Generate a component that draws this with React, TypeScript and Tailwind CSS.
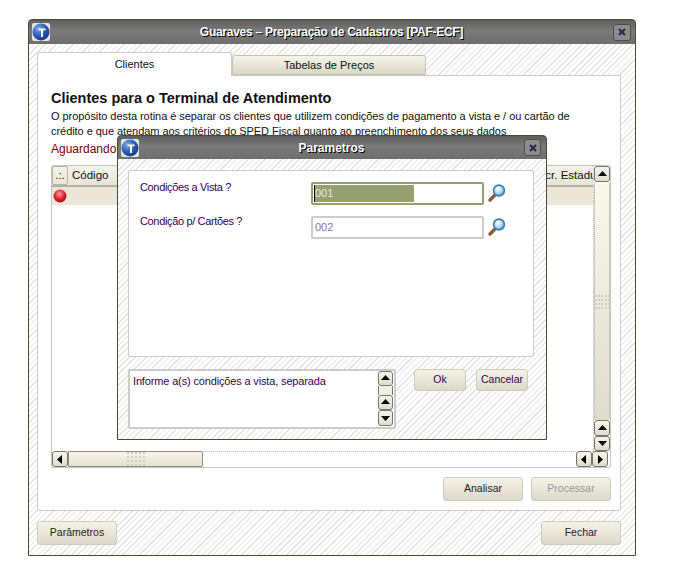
import React from 'react';

const hatch = 'bg-[repeating-linear-gradient(135deg,#e3e3e3_0px,#e3e3e3_1px,#ffffff_1px,#ffffff_4px)]';
const titleBar = 'bg-[linear-gradient(to_bottom,#5e5e5e,#7a7a7a_45%,#6e6e6e)]';
const titleFont = 'font-bold text-[12px] text-white [text-shadow:1px_1px_0_#000]';
const btn = 'flex items-center justify-center rounded-[3px] border border-[#cfccbe] bg-[linear-gradient(to_bottom,#f5f3e9,#dcd9c9)] text-[10.5px]';

const Logo = () => (
  <svg width="18" height="18" viewBox="0 0 18 18" className="shrink-0">
    <defs>
      <radialGradient id="ball" cx="0.35" cy="0.3" r="0.85">
        <stop offset="0" stopColor="#7fa9e6" />
        <stop offset="0.55" stopColor="#2458ae" />
        <stop offset="1" stopColor="#0f3272" />
      </radialGradient>
    </defs>
    <rect width="18" height="18" rx="2" fill="#e4e4e4" />
    <circle cx="9" cy="9" r="8.5" fill="url(#ball)" />
    <path d="M6.5 5.5h7v1.8h-2.5V14H9V7.3H6.5z" fill="#fff" />
  </svg>
);

const CloseBtn = ({ className }: { className: string }) => (
  <div className={`flex items-center justify-center rounded-[3px] border border-[#4c4c4c] bg-[#8c8c8c] ${className}`}>
    <svg width="8" height="8" viewBox="0 0 8 8">
      <path d="M1 1l6 6M7 1L1 7" stroke="#23284a" strokeWidth="2" />
    </svg>
  </div>
);

const Lens = () => (
  <svg width="20" height="20" viewBox="0 0 20 20" className="shrink-0">
    <defs>
      <radialGradient id="lens" cx="0.4" cy="0.35" r="0.7">
        <stop offset="0" stopColor="#ffffff" />
        <stop offset="0.6" stopColor="#a9d3ef" />
        <stop offset="1" stopColor="#3d88c0" />
      </radialGradient>
    </defs>
    <path d="M8.5 11.5L3 17" stroke="#8a5a3a" strokeWidth="3.4" strokeLinecap="round" />
    <circle cx="12" cy="7.5" r="5.4" fill="url(#lens)" stroke="#3b7fb2" strokeWidth="1.6" />
  </svg>
);

const Arrow = ({ dir }: { dir: 'up' | 'down' | 'left' | 'right' }) => {
  const d = { up: 'M0 6L4.5 1 9 6z', down: 'M0 2h9L4.5 7z', left: 'M6 0v9L1 4.5z', right: 'M2 0l5 4.5L2 9z' }[dir];
  return (
    <svg width="9" height="9" viewBox="0 0 9 9">
      <path d={d} fill="#000" />
    </svg>
  );
};

const ScrollBtn = ({ dir, className }: { dir: 'up' | 'down' | 'left' | 'right'; className: string }) => (
  <div className={`flex shrink-0 items-center justify-center rounded-[3px] border border-[#77766c] bg-[linear-gradient(to_bottom,#f8f6ea,#e0ddcd)] ${className}`}>
    <Arrow dir={dir} />
  </div>
);

const Grip = () => (
  <div className="grid grid-cols-5 gap-[2px]">
    {Array.from({ length: 20 }).map((_, i) => (
      <div key={i} className="h-[2px] w-[2px] bg-[#cfcdc0]" />
    ))}
  </div>
);

const App = () => {
  return (
    <div className='relative h-[574px] w-[674px] overflow-hidden bg-white pl-[28px] pt-[19px] font-["Liberation_Sans",sans-serif]'>
      {/* janela principal */}
      <div className={`flex h-[537px] w-[608px] flex-col rounded-t-[4px] border border-[#4a4a3c] ${hatch}`}>
        <div className={`flex h-[24px] shrink-0 items-center pl-[3px] pr-[4px] ${titleBar}`}>
          <Logo />
          <div className={`flex-1 text-center tracking-[-0.27px] ${titleFont}`}>Guaraves – Preparação de Cadastros [PAF-ECF]</div>
          <CloseBtn className="h-[17px] w-[18px]" />
        </div>

        <div className="flex flex-1 flex-col pl-[8px] pr-[14px] pt-[8px]">
          <div className="flex h-[23px] items-end">
            <div className="z-10 -mb-px flex h-[24px] w-[195px] items-center justify-center rounded-t-[3px] border border-b-0 border-[#cccccc] bg-white text-[11px] text-[#111]">
              Clientes
            </div>
            <div className="flex h-[20px] w-[194px] items-center justify-center rounded-t-[3px] border border-[#c4c2b4] bg-[linear-gradient(to_bottom,#f6f4ea,#dbd8c7)] text-[11px] text-[#111]">
              Tabelas de Preços
            </div>
          </div>

          <div className="h-[436px] rounded-b-[3px] border border-[#cccccc] bg-white pl-[13px] pr-[8px]">
            <h1 className="mt-[12px] h-[20px] text-[14.5px] font-bold leading-[20px] text-[#111]">Clientes para o Terminal de Atendimento</h1>
            <p className="mt-[1px] w-[540px] text-[11px] leading-[15px] tracking-[-0.05px] text-[#111]">
              O propósito desta rotina é separar os clientes que utilizem condições de pagamento a vista e / ou cartão de
              <br />
              crédito e que atendam aos critérios do SPED Fiscal quanto ao preenchimento dos seus dados
            </p>
            <div className="mt-[3px] h-[15px] text-[12px] leading-[15px] text-[#800000]">Aguardando Processamento</div>

            <div className="mt-[8px] flex h-[303px] w-[560px] flex-col rounded-[2px] border border-[#c6c6c6]">
              <div className="flex min-h-0 flex-1">
                <div className="flex-1 border-r border-dotted border-[#bbb]">
                  <div className="flex h-[21px] items-stretch border-b-2 border-[#b4b2a5] bg-[linear-gradient(to_bottom,#f5f3e9,#e8e5d6)] text-[11.5px] text-[#111]">
                    <div className="flex w-[16px] items-center justify-center rounded-[2px] border border-[#b8b6a8]">.:.</div>
                    <div className="flex w-[60px] items-center pl-[4px]">Código</div>
                    <div className="ml-auto flex w-[63px] items-center overflow-hidden whitespace-nowrap">Inscr. Estadual</div>
                  </div>
                  <div className="flex h-[18px] items-center bg-[#eae7d9] pl-[1px]">
                    <svg width="14" height="14" viewBox="0 0 14 14">
                      <defs>
                        <radialGradient id="led" cx="0.45" cy="0.35" r="0.7">
                          <stop offset="0" stopColor="#ff9a9a" />
                          <stop offset="0.6" stopColor="#e01c24" />
                          <stop offset="1" stopColor="#8c1016" />
                        </radialGradient>
                      </defs>
                      <circle cx="7" cy="7" r="6.5" fill="url(#led)" />
                    </svg>
                  </div>
                </div>
                <div className="flex w-[16px] shrink-0 flex-col">
                  <ScrollBtn dir="up" className="h-[16px]" />
                  <div className="flex flex-1 items-center justify-center rounded-[2px] border-x border-[#c9c7b9] bg-[linear-gradient(to_bottom,#fbf9ec,#dfdccd)] pt-[2px]">
                    <Grip />
                  </div>
                  <ScrollBtn dir="up" className="h-[16px]" />
                  <ScrollBtn dir="down" className="h-[15px]" />
                </div>
              </div>
              <div className="flex h-[16px] shrink-0">
                <ScrollBtn dir="left" className="w-[16px]" />
                <div className="flex w-[135px] items-center justify-center rounded-r-[2px] border border-[#8f8e83] bg-[linear-gradient(to_bottom,#f7f5e9,#e4e1d2)]">
                  <Grip />
                </div>
                <div className="flex-1 border-t border-dotted border-[#bbb]" />
                <ScrollBtn dir="left" className="w-[16px]" />
                <ScrollBtn dir="right" className="w-[16px]" />
                <div className="w-[2px]" />
              </div>
            </div>

            <div className="mt-[9px] flex w-[560px] justify-end gap-[8px]">
              <div className={`h-[24px] w-[80px] text-[#222] ${btn}`}>Analisar</div>
              <div className={`h-[24px] w-[80px] text-[#999] ${btn}`}>Processar</div>
            </div>
          </div>

          <div className="mt-[10px] flex justify-between">
            <div className={`h-[24px] w-[80px] text-[#222] ${btn}`}>Parâmetros</div>
            <div className={`h-[24px] w-[80px] text-[#222] ${btn}`}>Fechar</div>
          </div>
        </div>
      </div>

      {/* janela de parametros */}
      <div className={`absolute left-[117px] top-[135px] flex h-[305px] w-[430px] flex-col rounded-t-[4px] border border-[#4a4a3c] ${hatch}`}>
        <div className={`flex h-[23px] shrink-0 items-center pl-[3px] pr-[5px] ${titleBar}`}>
          <Logo />
          <div className={`flex-1 text-center ${titleFont}`}>Parametros</div>
          <CloseBtn className="h-[17px] w-[17px]" />
        </div>

        <div className="flex flex-1 flex-col pl-[10px] pr-[12px] pt-[11px]">
          <div className="h-[187px] rounded-[2px] border border-[#cccccc] bg-white pl-[11px] pt-[11px] text-[11px] text-[#3c0050]">
            <div className="flex h-[23px]">
              <div className="-mt-px w-[171px] leading-[12px] tracking-[-0.35px]">Condições a Vista ?</div>
              <div className="flex h-[23px] w-[173px] items-stretch rounded-[2px] border-2 border-[#95a070] bg-white p-[1px]">
                <div className="flex w-[100px] items-center border-l border-black bg-[#95a070] text-[11px] text-[#e8e8e0]">001</div>
              </div>
              <div className="ml-[3px] mt-[1px]"><Lens /></div>
            </div>
            <div className="mt-[11px] flex h-[23px]">
              <div className="-mt-px w-[171px] leading-[12px] tracking-[-0.35px]">Condição p/ Cartões ?</div>
              <div className="flex h-[23px] w-[173px] items-center rounded-[2px] border-2 border-[#cccccc] bg-white pl-[2px] text-[#808080]">002</div>
              <div className="ml-[3px] mt-[1px]"><Lens /></div>
            </div>
          </div>

          <div className="mt-[12px] flex">
            <div className="flex h-[60px] w-[268px] justify-between rounded-[2px] border-2 border-[#cccccc] bg-white pl-[3px] pr-[1px]">
              <div className="pt-[2px] text-[11px] tracking-[-0.15px] text-[#3c0050]">Informe a(s) condições a vista, separada</div>
              <div className="flex w-[15px] flex-col">
                <ScrollBtn dir="up" className="h-[15px]" />
                <div className="h-[9px] border-x border-[#77766c] bg-[#f2f0e3]" />
                <ScrollBtn dir="up" className="h-[15px]" />
                <ScrollBtn dir="down" className="h-[16px]" />
              </div>
            </div>
            <div className={`ml-[18px] h-[22px] w-[52px] text-[#3c0050] ${btn}`}>Ok</div>
            <div className={`ml-[10px] h-[22px] w-[52px] text-[#3c0050] ${btn}`}>Cancelar</div>
          </div>
        </div>
      </div>
    </div>
  );
};

export default App;
